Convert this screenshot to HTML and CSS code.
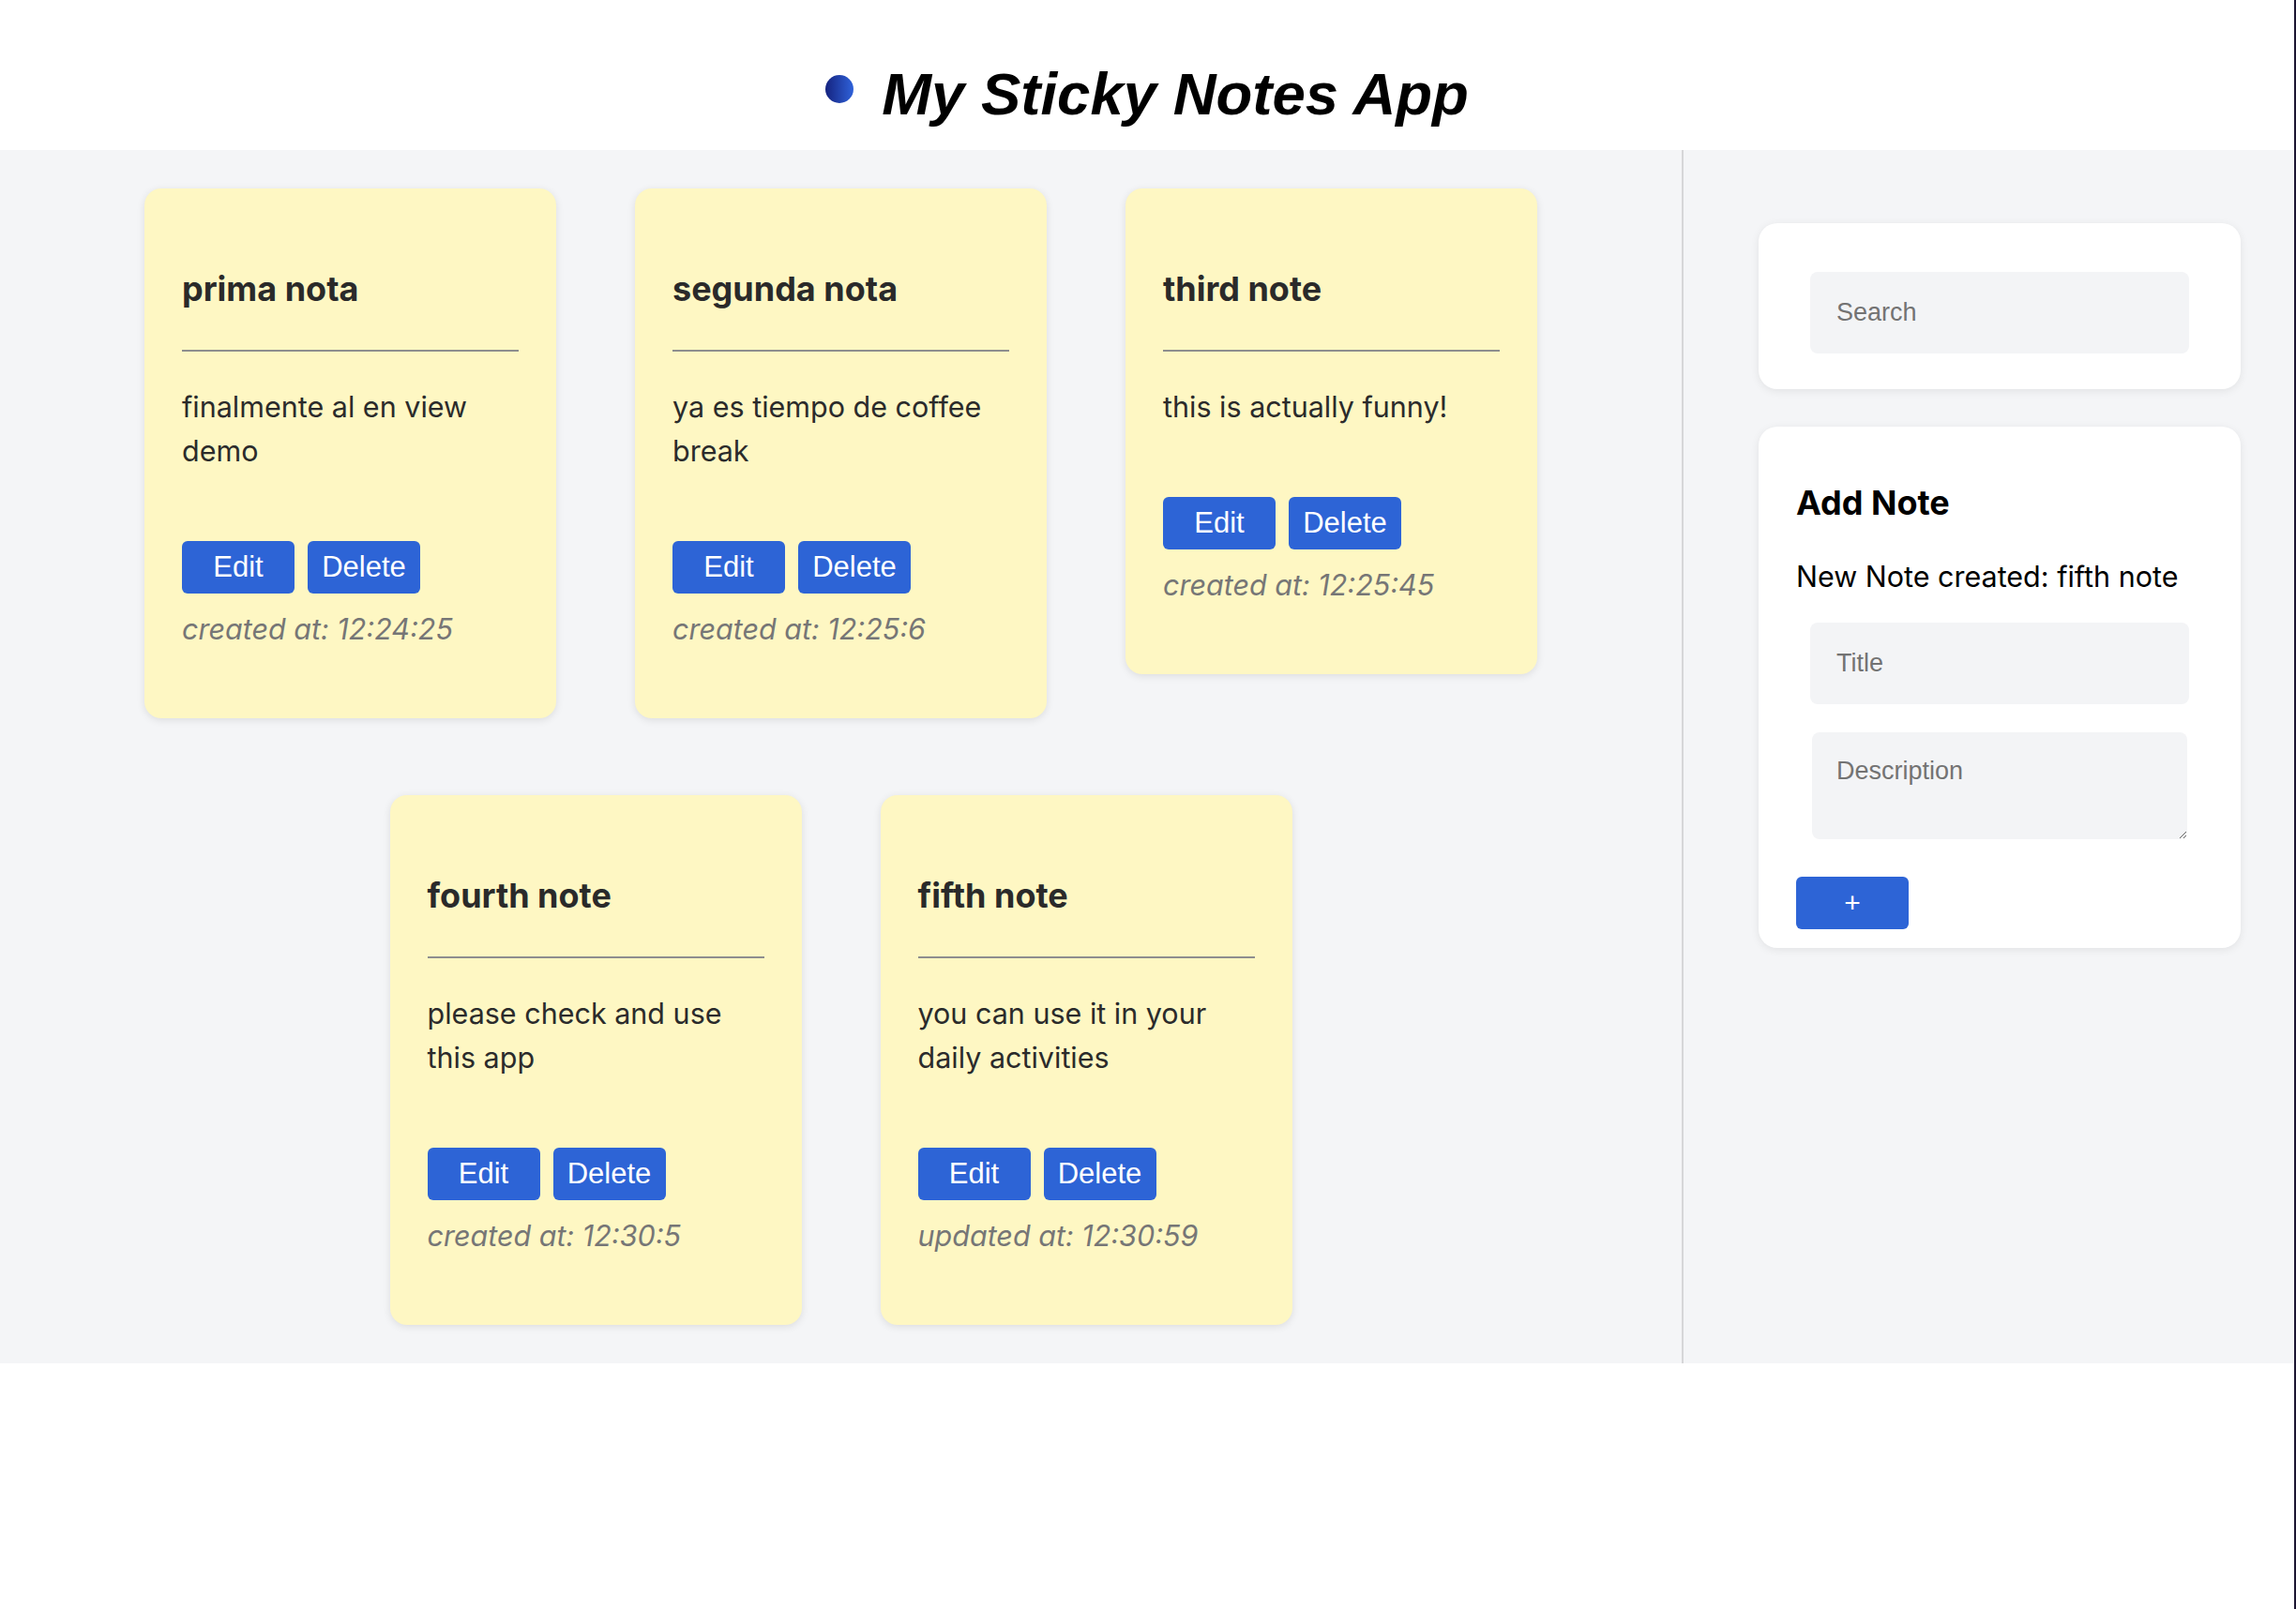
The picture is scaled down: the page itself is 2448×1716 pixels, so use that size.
FILE: index.html
```html
<!DOCTYPE html>
<html lang="en">
<head>
<meta charset="utf-8">
<title>My Sticky Notes App</title>
<link rel="stylesheet" href="styles.css">
</head>
<body>
<div class="app">
  <header class="header">
    <span class="dot"></span>
    <h1 class="app-title">My Sticky Notes App</h1>
  </header>
  <main class="main">
    <section class="notes">
      <article class="note">
        <h2 class="note-title">prima nota</h2>
        <hr class="note-rule">
        <p class="note-desc">finalmente al en view demo</p>
        <div class="note-actions"><button class="btn">Edit</button><button class="btn">Delete</button></div>
        <p class="note-time">created at: 12:24:25</p>
      </article>
      <article class="note">
        <h2 class="note-title">segunda nota</h2>
        <hr class="note-rule">
        <p class="note-desc">ya es tiempo de coffee break</p>
        <div class="note-actions"><button class="btn">Edit</button><button class="btn">Delete</button></div>
        <p class="note-time">created at: 12:25:6</p>
      </article>
      <article class="note">
        <h2 class="note-title">third note</h2>
        <hr class="note-rule">
        <p class="note-desc">this is actually funny!</p>
        <div class="note-actions"><button class="btn">Edit</button><button class="btn">Delete</button></div>
        <p class="note-time">created at: 12:25:45</p>
      </article>
      <article class="note">
        <h2 class="note-title">fourth note</h2>
        <hr class="note-rule">
        <p class="note-desc">please check and use this app</p>
        <div class="note-actions"><button class="btn">Edit</button><button class="btn">Delete</button></div>
        <p class="note-time">created at: 12:30:5</p>
      </article>
      <article class="note">
        <h2 class="note-title">fifth note</h2>
        <hr class="note-rule">
        <p class="note-desc">you can use it in your daily activities</p>
        <div class="note-actions"><button class="btn">Edit</button><button class="btn">Delete</button></div>
        <p class="note-time">updated at: 12:30:59</p>
      </article>
    </section>
    <aside class="side">
      <div class="panel panel-search">
        <input class="field" type="text" placeholder="Search">
      </div>
      <div class="panel panel-add">
        <h2 class="panel-title">Add Note</h2>
        <p class="panel-msg">New Note created: fifth note</p>
        <input class="field field-title" type="text" placeholder="Title">
        <textarea class="field field-desc" placeholder="Description"></textarea>
        <button class="btn btn-add">+</button>
      </div>
    </aside>
  </main>
</div>
</body>
</html>
```

FILE: styles.css
```css
* { box-sizing: border-box; }

html, body {
  margin: 0;
  padding: 0;
  background: #ffffff;
}

body {
  font-family: Inter, "Noto Sans", sans-serif;
  color: #2b2b2b;
}

.app {
  min-height: 100vh;
  border-right: 2px solid #1c1532;
}

.header {
  height: 160px;
  padding-top: 40px;
  display: flex;
  align-items: center;
  justify-content: center;
  gap: 30px;
  background: #ffffff;
}

.dot {
  width: 30px;
  height: 30px;
  margin-bottom: 10px;
  border-radius: 50%;
  background: linear-gradient(90deg, #15237f 0%, #2f62da 100%);
  flex: none;
}

.app-title {
  margin: 0;
  font-family: "Liberation Sans", Arial, sans-serif;
  font-weight: 700;
  font-style: italic;
  font-size: 63.5px;
  line-height: 72px;
  color: #000000;
}

.main {
  display: flex;
  background: #f4f5f7;
}

.notes {
  flex: 1;
  display: flex;
  flex-wrap: wrap;
  justify-content: center;
  align-items: flex-start;
  align-content: flex-start;
}

.note {
  width: 439px;
  margin: 41px 42px;
  padding: 0 40px 72px;
  background: #fef7c3;
  border-radius: 18px;
  box-shadow: 0 2px 8px rgba(0, 0, 0, 0.10);
}

.note-title {
  margin: 85px 0 0;
  font-size: 36px;
  line-height: 44px;
  font-weight: 700;
  color: #2a2a2a;
}

.note-rule {
  margin: 43px 0 0;
  border: 0;
  border-top: 2px solid #8e8e8e;
  height: 0;
}

.note-desc {
  margin: 35px 0 0;
  font-size: 30.5px;
  line-height: 47px;
  color: #2b2b2b;
}

.note-actions {
  display: flex;
  gap: 14px;
  margin-top: 73px;
}

.btn {
  width: 120px;
  height: 56px;
  padding: 0;
  border: 0;
  border-radius: 6px;
  background: #2d64d6;
  color: #ffffff;
  font-family: "Liberation Sans", Arial, sans-serif;
  font-size: 31px;
  cursor: pointer;
}

.note-time {
  margin: 14px 0 0;
  font-size: 30.5px;
  line-height: 47px;
  font-style: italic;
  color: #767676;
}

.side {
  width: 653px;
  flex: none;
  border-left: 2px solid #d6d6d8;
  padding: 78px 57px 0 80px;
}

.panel {
  background: #ffffff;
  border-radius: 20px;
  box-shadow: 0 2px 10px rgba(0, 0, 0, 0.08);
}

.panel-search {
  padding: 52px 40px 38px;
}

.panel-add {
  margin-top: 40px;
  padding: 40px 40px 20px;
}

.field {
  display: block;
  width: calc(100% - 30px);
  height: 87px;
  margin: 0 15px;
  padding: 0 0 0 28px;
  border: 0;
  border-radius: 8px;
  background: #f3f4f6;
  font-family: "Liberation Sans", Arial, sans-serif;
  font-size: 27px;
  color: #333333;
  outline: none;
}

.field::placeholder {
  color: #737373;
}

.panel-title {
  margin: 19px 0 0;
  font-size: 36px;
  line-height: 44px;
  font-weight: 700;
  color: #000000;
}

.panel-msg {
  margin: 33px 0 0;
  font-size: 30.5px;
  line-height: 47px;
  color: #000000;
}

.field-title {
  margin-top: 26px;
}

.field-desc {
  width: calc(100% - 34px);
  height: 114px;
  margin: 30px 17px 0;
  padding: 26px 0 0 26px;
  resize: vertical;
}

.btn-add {
  display: block;
  margin-top: 40px;
  font-size: 30px;
}
```
